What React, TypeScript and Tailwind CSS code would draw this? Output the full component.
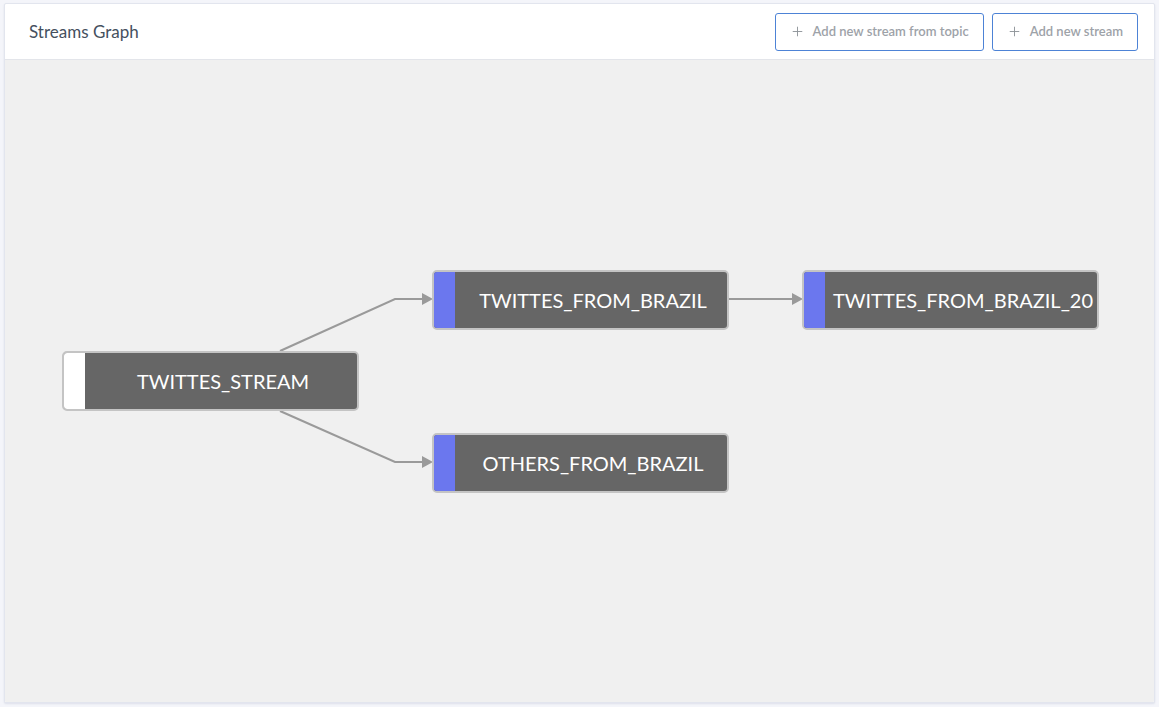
import { Plus } from "lucide-react";

type GraphNode = {
  id: string;
  label: string;
  x: number;
  y: number;
  root?: boolean;
};

const nodes: GraphNode[] = [
  { id: "a", label: "TWITTES_STREAM", x: 57, y: 291, root: true },
  { id: "b", label: "TWITTES_FROM_BRAZIL", x: 427, y: 210 },
  { id: "c", label: "TWITTES_FROM_BRAZIL_20", x: 797, y: 210 },
  { id: "d", label: "OTHERS_FROM_BRAZIL", x: 427, y: 373 },
];

const edges = [
  "M275 291 L390 239 L418 239",
  "M723 239 L788 239",
  "M275 351 L390 402 L418 402",
];

const arrows = [
  "M417 233 L428 239 L417 245 Z",
  "M787 233 L798 239 L787 245 Z",
  "M417 396 L428 402 L417 408 Z",
];

const Node = ({ node }: { node: GraphNode }) => (
  <div
    className="absolute flex h-[60px] w-[297px] overflow-hidden rounded-[5px] border-2 border-[#c4c4c4] bg-[#666666]"
    style={{ left: node.x, top: node.y }}
  >
    <div className={`w-[21px] shrink-0 ${node.root ? "bg-white" : "bg-[#6b77ee]"}`} />
    <div className="flex flex-1 items-center justify-center overflow-hidden whitespace-nowrap pl-1 text-[20px] text-white">
      {node.label}
    </div>
  </div>
);

const App = () => {
  return (
    <div className="h-[707px] w-full bg-[#f4f5fa] p-[3px_4px_4px_4px] font-['Lato','Liberation_Sans',sans-serif]">
      <div className="flex h-full flex-col overflow-hidden rounded-[2px] border border-[#e2e5ee] bg-white shadow-[0_1px_2px_rgba(60,70,120,0.12)]">
        <div className="flex h-[56px] shrink-0 items-center justify-between border-b border-[#e3e5ea] pl-6 pr-4">
          <h1 className="text-[17px] text-[#45505e]">Streams Graph</h1>
          <div className="flex gap-2">
            <button className="flex h-[38px] items-center gap-2 rounded-[3px] border border-[#4d83d6] px-[14px] text-[13px] font-semibold text-[#9da2a8]">
              <Plus size={15} strokeWidth={1.5} className="text-[#8f949a]" />
              Add new stream from topic
            </button>
            <button className="flex h-[38px] items-center gap-2 rounded-[3px] border border-[#4d83d6] px-[14px] text-[13px] font-semibold text-[#9da2a8]">
              <Plus size={15} strokeWidth={1.5} className="text-[#8f949a]" />
              Add new stream
            </button>
          </div>
        </div>
        <div className="relative flex-1 bg-[#f0f0f0]">
          <svg className="absolute inset-0 h-full w-full">
            {edges.map((d) => (
              <path key={d} d={d} stroke="#9a9a9a" strokeWidth={2} fill="none" />
            ))}
            {arrows.map((d) => (
              <path key={d} d={d} fill="#9a9a9a" />
            ))}
          </svg>
          {nodes.map((n) => (
            <Node key={n.id} node={n} />
          ))}
        </div>
      </div>
    </div>
  );
};

export default App;
